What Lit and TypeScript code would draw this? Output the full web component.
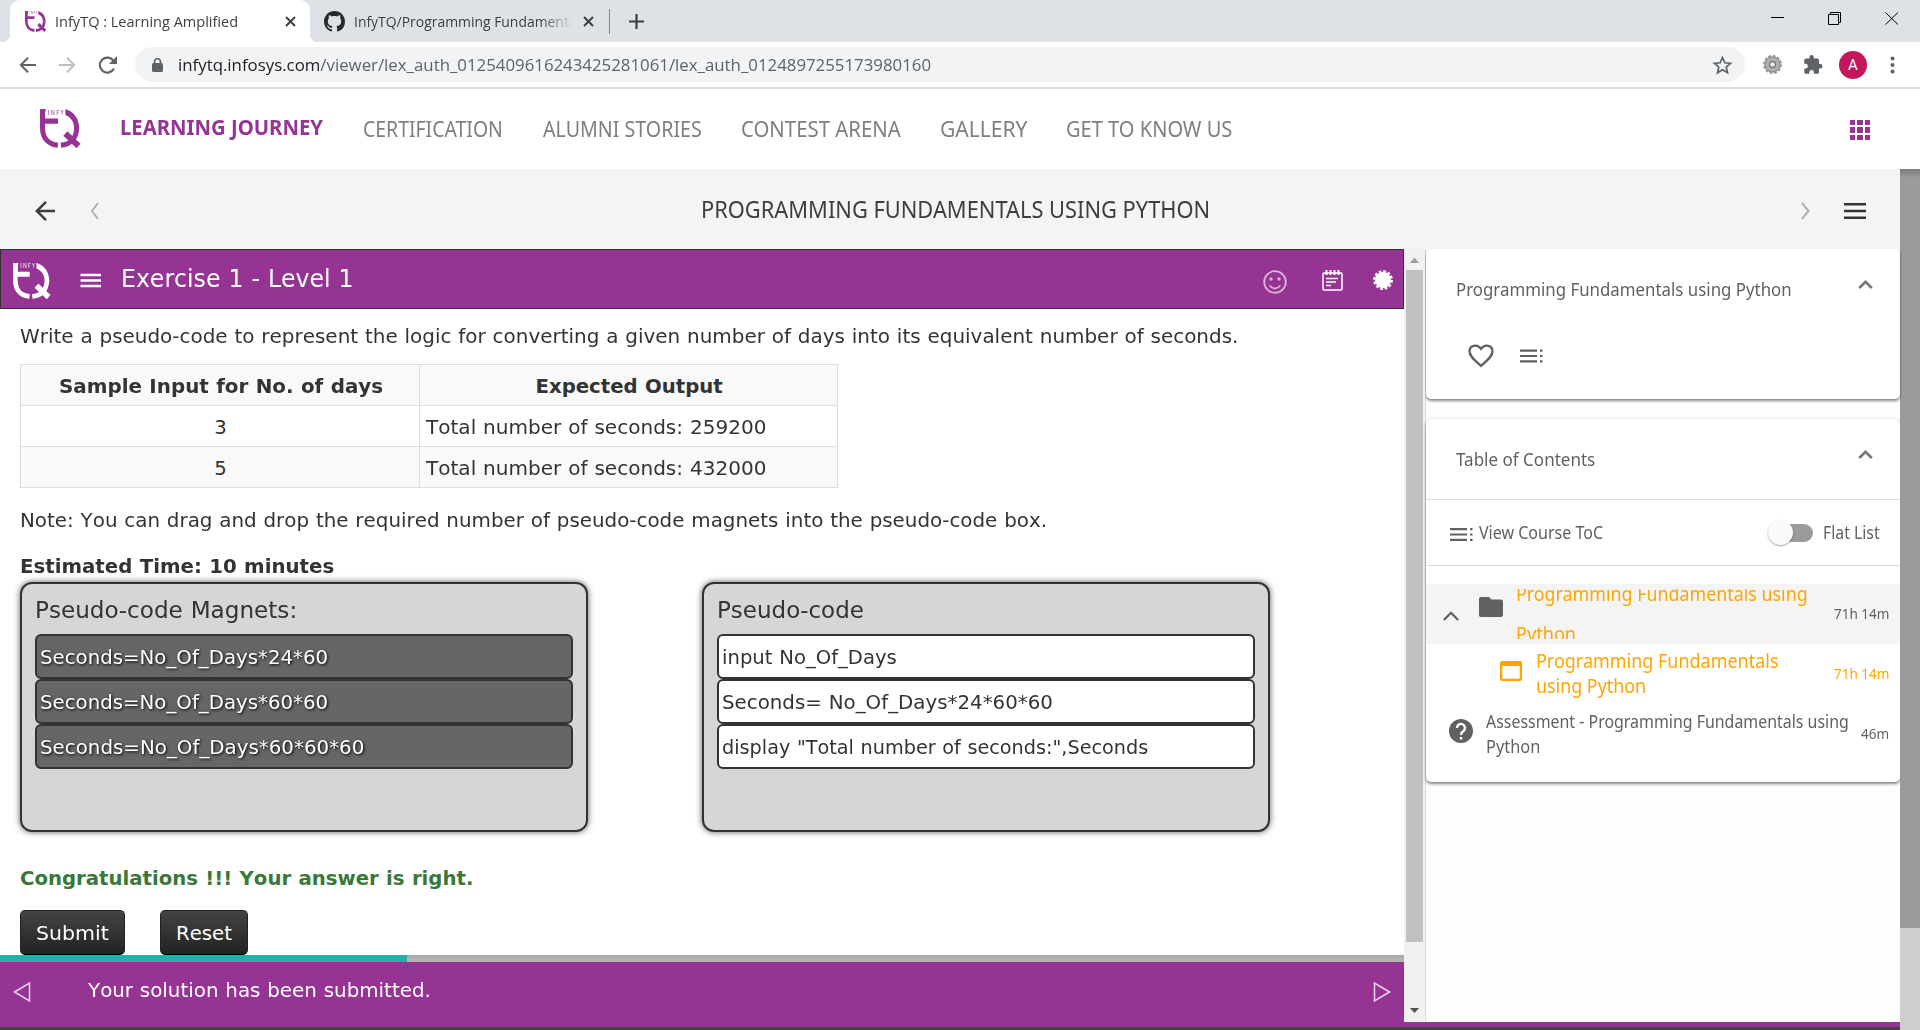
import { LitElement, html, css, svg } from "lit";
import { customElement, property, query } from "lit/decorators.js";

/** A single line of text, condensed or expanded to a given width. */
@customElement("fit-text")
class FitText extends LitElement {
  @property({ type: Number }) w = 100;
  @query(".line") line!: HTMLElement;
  static styles = css`
    :host { display: block; flex: none; white-space: nowrap; }
    .line { display: inline-block; transform-origin: 0 50%; vertical-align: top; }
  `;
  updated() {
    this.style.width = `${this.w}px`;
    this.line.style.transform = `scaleX(${this.w / this.line.offsetWidth})`;
  }
  render() {
    return html`<span class="line"><slot></slot></span>`;
  }
}

/** The InfyTQ mark, drawn in the current colour. */
@customElement("tq-logo")
class TqLogo extends LitElement {
  static styles = css`
    :host { display: block; flex: none; }
    svg { display: block; width: 100%; height: 100%; overflow: visible; }
    .s { fill: none; stroke: currentColor; stroke-width: 5.2; }
    .q { stroke-width: 6; }
    .n { font: 600 7.6px "Open Sans", sans-serif; fill: currentColor; opacity: .85; }
  `;
  render() {
    return html`<svg viewBox="0 0 41 39" preserveAspectRatio="none">
      <path class="s" d="M2.600 0V19C2.600 29.500 9 35.500 18.400 36.200M2.600 12.200H18.500" />
      <path fill="currentColor" d="M0 0H6L5 4V9H0Z" />
      <path class="s" d="M37.600 19C37.300 29.500 31 35.500 21.400 36.200" />
      <path fill="currentColor" d="M26 0C35 2.500 40.200 10 40.200 19.500H35C35 13 32 8.500 26 6Z" />
      <path class="s q" d="M26 24.500L39.500 37" />
      <text class="n" transform="translate(8 5.900) scale(.72 1)" textLength="22.500">INFY</text>
    </svg>`;
  }
}

const icon = (w: number, h: number, body: unknown, cls = "") =>
  html`<svg class="ic ${cls}" width=${w} height=${h} viewBox="0 0 ${w} ${h}">${body}</svg>`;

const closeX = svg`<path d="M1 1L10 10M10 1L1 10" stroke="#3c4043" stroke-width="2"/>`;
const chevUp = svg`<path d="M1.200 8L7.500 1.800L13.800 8" fill="none" stroke="#757575" stroke-width="2.600"/>`;
const tocLines = svg`<path d="M0 1.200H17M0 6.500H17M0 11.800H17M20 1.200H22.500M20 6.500H22.500M20 11.800H22.500" stroke="#616161" stroke-width="2.200"/>`;

const NAV: [string, number, number][] = [
  ["CERTIFICATION", 140, 40],
  ["ALUMNI STORIES", 159, 40],
  ["CONTEST ARENA", 160, 39],
  ["GALLERY", 87, 39],
  ["GET TO KNOW US", 166, 39],
];
const MAGNETS: [string, number][] = [
  ["Seconds=No_Of_Days*24*60", 288],
  ["Seconds=No_Of_Days*60*60", 288],
  ["Seconds=No_Of_Days*60*60*60", 324],
];
const CODE: [string, number][] = [
  ["input No_Of_Days", 175],
  ["Seconds= No_Of_Days*24*60*60", 331],
  ['display "Total number of seconds:",Seconds', 426],
];

@customElement("app-root")
class AppRoot extends LitElement {
  static styles = css`
    :host { display: block; width: 1920px; height: 1030px; overflow: hidden; background: #fff; font-family: "Noto Sans", sans-serif; line-height: 30px; color: #333; }
    * { box-sizing: border-box; }
    .ic { display: block; flex: none; overflow: visible; }

    .strip { height: 42px; background: #dee1e6; display: flex; font-family: "Open Sans", sans-serif; font-size: 15px; line-height: 22px; color: #3c4043; }
    .tab { position: relative; margin-left: 10px; width: 300px; background: #fff; border-radius: 10px 10px 0 0; padding: 0 15px; display: flex; align-items: center; }
    .tab::before, .tab::after { content: ""; position: absolute; bottom: 0; width: 8px; height: 8px; }
    .tab::before { left: -8px; background: radial-gradient(circle at 0 0, transparent 8px, #fff 8.5px); }
    .tab::after { right: -8px; background: radial-gradient(circle at 100% 0, transparent 8px, #fff 8.5px); }
    .fav { width: 21px; height: 21px; color: #963494; margin-right: 9px; }
    .tab fit-text, .clip { padding-bottom: 1px; }
    .tab .ic { margin-left: 47px; }
    .tab2 { display: flex; align-items: center; padding-left: 14px; width: 299px; }
    .clip { width: 219px; overflow: hidden; margin: 0 10px 0 9px; -webkit-mask-image: linear-gradient(90deg, #000 85%, transparent); mask-image: linear-gradient(90deg, #000 85%, transparent); }
    .bar { width: 1px; height: 25px; background: #80868b; align-self: center; }
    .plus { align-self: center; margin-left: 19px; }
    .win { margin-left: auto; display: flex; align-items: flex-start; gap: 43px; padding: 12px 21px 0 0; }

    .tools { height: 45px; display: flex; align-items: center; padding-left: 19px; }
    .omni { margin-left: 18px; width: 1610px; height: 35px; border-radius: 18px; background: #f1f3f4; display: flex; align-items: center; padding: 0 13px 0 17px; }
    .url { margin-left: 15px; font: 17px/30px "Open Sans", sans-serif; color: #5f6368; }
    .url b { font-weight: 400; color: #202124; }
    .star { margin-left: auto; }
    .ava { width: 28px; height: 28px; border-radius: 50%; background: #c2185b; color: #fff; font: 15px/28px Roboto, sans-serif; text-align: center; margin: 0 24px 0 17px; }
    .rule { height: 2px; background: #dadae2; }

    .nav { height: 80px; display: flex; align-items: flex-start; padding-left: 40px; font-size: 21.5px; color: #7f7f7f; }
    .nav .mark { width: 40px; height: 39px; margin-top: 20px; color: #963494; }
    .nav .on { margin: 22px 0 0 40px; font-size: 22px; font-weight: 700; color: #963494; }
    .nav .item { margin-top: 25px; }
    .g40 { margin-left: 40px; } .g39 { margin-left: 39px; }
    .apps { margin: 31px 50px 0 auto; }

    .main { display: flex; height: 861px; }
    .page { width: 1900px; }
    .vbar { width: 20px; background: #cecece; }
    .vthumb { height: 759px; background: linear-gradient(#7c7c7c, #9b9b9b 9px); }
    .head { height: 80px; background: #f4f4f4; display: flex; align-items: center; padding: 4px 34px 0 35px; color: #3e3e3e; font-size: 23.3px; }
    .title { margin: -4px auto 0 602px; }
    .body { display: flex; height: 773px; }
    .left { width: 1404px; height: 778px; font-family: "DejaVu Sans", sans-serif; font-size: 19.7px; font-kerning: none; word-spacing: .5px; }
    .ex { height: 60px; border: 1px solid #333; background: #963494; color: #fff; display: flex; align-items: flex-start; padding: 13px 10px 0 12px; }
    .ex .mark { width: 37px; height: 36px; }
    .ex .name { font-size: 24px; margin: 1px 0 0 20px; }
    .ex .tools2 { margin-left: auto; display: flex; }
    .q { padding: 13px 0 0 20px; height: 646px; }
    .tbl { display: grid; grid-template-columns: 399px 418px; grid-auto-rows: 41px; width: 819px; margin-top: 12px; border: solid #ddd; border-width: 1px 0 0 1px; }
    .c { border: solid #ddd; border-width: 0 1px 1px 0; padding: 7px 0 0 6px; display: flex; }
    .c.m { justify-content: center; padding-left: 1px; }
    .c.z { background: #f9f9f9; }
    .b { font-weight: 700; }
    .note { margin-top: 18px; } .est { margin: 16px 0 0; }
    .boxes { display: flex; gap: 114px; }
    .box { width: 568px; height: 250px; border: 2px solid #333; border-radius: 12px; background: #d6d6d6; box-shadow: 0 0 6px rgba(0,0,0,.65); padding: 11px 13px 0; }
    .bt { font-size: 23.3px; margin: 0 0 9px 0; }
    .mg { height: 45px; border: 2px solid #333; border-radius: 6px; padding: 6.5px 0 0 3px; background: #666; color: #fff; font-size: 19.3px; text-shadow: 1px 1px 3px #000; }
    .mg.w { background: #fff; color: #333; text-shadow: none; }
    .ok { margin-top: 32px; color: #3a783a; font-weight: 700; }
    .btns { display: flex; gap: 35px; margin-top: 16px; color: #fff; }
    .btn { height: 45px; border-radius: 5px; border: 1px solid #222; border-bottom-color: #000; background: linear-gradient(#444, #222); padding: 8px 15px 0; }
    .prog { height: 7px; background: linear-gradient(#a5a5a5, #b5b5b5 60%); }
    .done { width: 407px; height: 7px; background: #20b2aa; }
    .foot { height: 65px; background: #963494; color: #fff; display: flex; align-items: flex-start; padding: 13px 13px 0; }
    .foot .ic { margin-top: 7px; }
    .foot .msg { margin: 1px auto 0 57px; }
    .sb { width: 22px; background: #f1f1f1; border-right: 1px solid #ddd; display: flex; flex-direction: column; align-items: center; padding: 7px 1px 0 0; }
    .th { width: 17px; height: 672px; margin: 6px 0 66px; background: #c1c1c1; }
    .side { width: 474px; background: #fdfdfd; color: #616161; font-size: 18px; }
    .card { background: #fff; border-radius: 5px; box-shadow: 0 2px 3px rgba(0,0,0,.45), 0 0 3px rgba(0,0,0,.12); }
    .c1 { height: 150px; clip-path: inset(0 -2px -6px -1px); }
    .c2 { height: 363px; margin-top: 20px; }
    .ct { height: 80px; display: flex; padding: 25px 27px 0 30px; justify-content: space-between; }
    .ct .ic { margin-top: 6px; }
    .acts { display: flex; gap: 26px; padding: 15px 0 0 42px; }
    .line { height: 1px; background: #ddd; }
    .view { height: 65px; display: flex; align-items: center; padding: 1px 20px 0 24px; font-size: 17.2px; }
    .view .v { margin: 0 0 0 6px; }
    .sw { position: relative; margin: 0 10px 0 auto; width: 35px; height: 18px; border-radius: 9px; background: #9b9b9b; }
    .knob { position: absolute; left: -10px; top: -4px; width: 25px; height: 25px; border-radius: 50%; background: #fafafa; box-shadow: 0 1px 2px rgba(0,0,0,.35); }
    .r1 { margin-top: 18px; height: 60px; background: #f4f4f4; display: flex; padding-left: 17px; }
    .r1 .cv { margin: 27px 20px 0 0; } .r1 .fo { margin: 13px 13px 0 0; }
    .two { margin-top: 5px; height: 50px; overflow: hidden; color: #ffa500; font-size: 19px; line-height: 39px; }
    .up { margin-top: -14px; }
    .two fit-text + fit-text { padding-top: 1px; }
    .tm { margin: 14px 11px 0 auto; font-size: 14.5px; }
    .or { color: #ffa500; }
    .r2 { height: 65px; display: flex; padding-left: 74px; font-size: 19px; line-height: 25px; }
    .r2 .wi { margin: 17px 14px 0 0; } .r2 .tx { padding-top: 5px; } .r2 .tm { margin-top: 17px; }
    .r3 { display: flex; padding-left: 23px; font-size: 17.3px; line-height: 25px; }
    .r3 .qm { margin: 10px 13px 0 0; } .r3 .tm { margin-top: 12px; }
    .base { height: 5px; background: #963494; margin-left: 1404px; }
    .edge { height: 3px; background: #434343; }
  `;

  render() {
    return html`
      <div class="strip">
        <div class="tab">
          <tq-logo class="fav"></tq-logo>
          <fit-text w="183">InfyTQ : Learning Amplified</fit-text>
          ${icon(11, 11, closeX)}
        </div>
        <div class="tab2">
          ${icon(21, 21, svg`<path transform="scale(1.3125)" fill="#24292e" fill-rule="evenodd" d="M8 0C3.58 0 0 3.58 0 8c0 3.540 2.290 6.530 5.470 7.590.4.070.55-.17.55-.38 0-.19-.01-.82-.01-1.490-2.010.37-2.530-.49-2.690-.94-.09-.23-.48-.94-.82-1.130-.28-.15-.68-.52-.01-.53.63-.01 1.080.58 1.230.82.72 1.210 1.870.87 2.330.66.07-.52.28-.87.51-1.070-1.780-.2-3.640-.89-3.640-3.950 0-.87.31-1.590.82-2.150-.08-.2-.36-1.020.08-2.120 0 0 .67-.21 2.200.82.64-.18 1.320-.27 2-.27s1.360.09 2 .27c1.530-1.040 2.200-.82 2.200-.82.44 1.100.16 1.920.08 2.120.51.56.82 1.270.82 2.150 0 3.070-1.870 3.750-3.650 3.950.29.25.54.73.54 1.480 0 1.070-.01 1.930-.01 2.200 0 .21.15.46.55.38A8.010 8.010 0 0 0 16 8c0-4.420-3.580-8-8-8z"/>`)}
          <div class="clip"><fit-text w="233">InfyTQ/Programming Fundamentals</fit-text></div>
          ${icon(11, 11, closeX)}
        </div>
        <div class="bar"></div>
        ${icon(15, 15, svg`<path d="M7.500 0V15M0 7.500H15" stroke="#3c4043" stroke-width="2.200"/>`, "plus")}
        <div class="win">
          ${icon(14, 14, svg`<path d="M0 5.500H13" stroke="#000"/>`)}
          ${icon(14, 14, svg`<path d="M.5 2.500H10.500V12.500H.5ZM2.500 2.500V.5H12.500V10.500H10.500" fill="none" stroke="#000"/>`)}
          ${icon(14, 14, svg`<path d="M.5 .5L13 12.500M13 .5L.5 12.500" stroke="#000"/>`)}
        </div>
      </div>
      <div class="tools">
        ${icon(17, 16, svg`<path d="M17 8H2M9 .8L1.800 8L9 15.200" fill="none" stroke="#5f6368" stroke-width="2"/>`)}
        ${icon(40, 16, svg`<path d="M23 8H38M31 .8L38.200 8L31 15.200" fill="none" stroke="#bdbfc1" stroke-width="2"/>`)}
        ${icon(41, 18, svg`<path d="M38 12.500A7.500 7.500 0 1 1 37.500 4.800" fill="none" stroke="#5f6368" stroke-width="2.200"/><path d="M41 0V8H33Z" fill="#5f6368"/>`)}
        <div class="omni">
          ${icon(11, 14, svg`<rect y="5" width="11" height="9" rx="1.500" fill="#5f6368"/><path d="M2.500 6V3.800A3 3 0 0 1 8.500 3.800V6" fill="none" stroke="#5f6368" stroke-width="1.600"/>`)}
          <fit-text class="url" w="753"><b>infytq.infosys.com</b>/viewer/lex_auth_0125409616243425281061/lex_auth_0124897255173980160</fit-text>
          ${icon(19, 18, svg`<path d="M9.500 1.500L11.800 6.800L17.500 7.300L13.200 11L14.500 16.700L9.500 13.700L4.500 16.700L5.800 11L1.500 7.300L7.200 6.800Z" fill="none" stroke="#5f6368" stroke-width="1.700"/>`, "star")}
        </div>
        ${icon(37, 20, svg`<circle cx="27.500" cy="9.500" r="8.300" fill="none" stroke="#888" stroke-width="2.200" stroke-dasharray="2.600 1.750"/><circle cx="27.500" cy="9.500" r="5.600" fill="none" stroke="#b0b0b0" stroke-width="5.500"/><circle cx="27.500" cy="9.500" r="7.300" fill="none" stroke="#8a8a8a" stroke-width="1"/><circle cx="27.500" cy="9.500" r="3" fill="#eee" stroke="#777" stroke-width="1.300"/>`)}
        ${icon(40, 18, svg`<path transform="translate(20.500 -2) scale(.87 .9)" fill="#5f6368" d="M20.500 11H19V7c0-1.100-.9-2-2-2h-4V3.500a2.500 2.500 0 0 0-5 0V5H4c-1.100 0-2 .9-2 2v3.800h1.500a2.700 2.700 0 0 1 0 5.400H2V20c0 1.100.9 2 2 2h3.800v-1.500a2.700 2.700 0 0 1 5.400 0V22H17c1.100 0 2-.9 2-2v-4h1.500a2.500 2.500 0 0 0 0-5z"/>`)}
        <div class="ava">A</div>
        ${icon(4, 18, svg`<circle cx="1.500" cy="2.500" r="2" fill="#5f6368"/><circle cx="1.500" cy="9" r="2" fill="#5f6368"/><circle cx="1.500" cy="15.500" r="2" fill="#5f6368"/>`)}
      </div>
      <div class="rule"></div>
      <div class="nav">
        <tq-logo class="mark"></tq-logo>
        <fit-text class="on" w="203">LEARNING JOURNEY</fit-text>
        <div></div>
        ${NAV.map(([t, w, g], i) => html`<fit-text class="item ${i ? `g${g}` : "g40"}" w=${w}>${t}</fit-text>`)}
        ${icon(20, 20, svg`<path fill="#963494" d="M0 0h5v5H0zM7 0h6v5H7zM15 0h5v5h-5zM0 7h5v6H0zM7 7h6v6H7zM15 7h5v6h-5zM0 15h5v5H0zM7 15h6v5H7zM15 15h5v5h-5z"/>`, "apps")}
      </div>
      <div class="main">
        <div class="page">
          <div class="head">
            ${icon(20, 20, svg`<path d="M20 10H2M11 .8L1.800 10L11 19.200" fill="none" stroke="#3e3e3e" stroke-width="2.500"/>`)}
            ${icon(44, 18, svg`<path d="M43 1L37 9L43 17" fill="none" stroke="#b0b0b0" stroke-width="2"/>`)}
            <fit-text class="title" w="509">PROGRAMMING FUNDAMENTALS USING PYTHON</fit-text>
            ${icon(43, 18, svg`<path d="M1 1L7.500 9L1 17" fill="none" stroke="#b0b0b0" stroke-width="2"/>`)}
            ${icon(22, 16, svg`<path d="M0 1.300H22M0 8H22M0 14.700H22" stroke="#333" stroke-width="2.600"/>`)}
          </div>
          <div class="body">
            <div class="left">
              <div class="ex">
                <tq-logo class="mark"></tq-logo>
                ${icon(51, 26, svg`<path d="M30.500 12H51M30.500 17.500H51M30.500 23H51" stroke="#fff" stroke-width="2.600"/>`)}
                <fit-text class="name" w="233">Exercise 1 - Level 1</fit-text>
                <div class="tools2">
                  ${icon(24, 34, svg`<g fill="none" stroke="#d9b3d9" stroke-width="1.800"><circle cx="12" cy="19" r="10.800"/><path d="M6.500 22.500Q12 28.500 17.500 22.500"/></g><circle cx="8" cy="16" r="1.700" fill="#d9b3d9"/><circle cx="16" cy="16" r="1.700" fill="#d9b3d9"/>`)}
                  ${icon(56, 34, svg`<g transform="translate(35 7)" fill="none" stroke="#fff" stroke-width="1.500"><rect x="1" y="3" width="19" height="17" rx="1"/><path d="M4.500 0V5M8.500 0V5M12.500 0V5M16.500 0V5" stroke-width="2"/><path d="M4 8.500H16M4 12H14M4 15.500H9"/></g>`)}
                  ${icon(50, 34, svg`<circle cx="40" cy="17" r="8" fill="#fff"/><circle cx="40" cy="17" r="8.600" fill="none" stroke="#fff" stroke-width="2.600" stroke-dasharray="2.700 1.800"/>`)}
                </div>
              </div>
              <div class="q">
                <fit-text w="1218">Write a pseudo-code to represent the logic for converting a given number of days into its equivalent number of seconds.</fit-text>
                <div class="tbl">
                  <div class="c m z b"><fit-text w="324">Sample Input for No. of days</fit-text></div>
                  <div class="c m z b"><fit-text w="187">Expected Output</fit-text></div>
                  <div class="c m">3</div>
                  <div class="c"><fit-text w="340">Total number of seconds: 259200</fit-text></div>
                  <div class="c m z">5</div>
                  <div class="c z"><fit-text w="340">Total number of seconds: 432000</fit-text></div>
                </div>
                <fit-text class="note" w="1027">Note: You can drag and drop the required number of pseudo-code magnets into the pseudo-code box.</fit-text>
                <fit-text class="est b" w="314">Estimated Time: 10 minutes</fit-text>
                <div class="boxes">
                  <div class="box">
                    <fit-text class="bt" w="262">Pseudo-code Magnets:</fit-text>
                    ${MAGNETS.map(([t, w]) => html`<div class="mg"><fit-text w=${w}>${t}</fit-text></div>`)}
                  </div>
                  <div class="box">
                    <fit-text class="bt" w="147">Pseudo-code</fit-text>
                    ${CODE.map(([t, w]) => html`<div class="mg w"><fit-text w=${w}>${t}</fit-text></div>`)}
                  </div>
                </div>
                <fit-text class="ok" w="453">Congratulations !!! Your answer is right.</fit-text>
                <div class="btns">
                  <div class="btn"><fit-text w="73">Submit</fit-text></div>
                  <div class="btn"><fit-text w="56">Reset</fit-text></div>
                </div>
              </div>
              <div class="prog"><div class="done"></div></div>
              <div class="foot">
                ${icon(18, 20, svg`<path d="M1.500 10L16.500 1V19Z" fill="none" stroke="#ecd3ec" stroke-width="1.500"/>`)}
                <fit-text class="msg" w="343">Your solution has been submitted.</fit-text>
                ${icon(18, 20, svg`<path d="M16.500 10L1.500 1V19Z" fill="none" stroke="#ecd3ec" stroke-width="1.500"/>`)}
              </div>
            </div>
            <div class="sb">
              ${icon(9, 8, svg`<path d="M0 7H9L4.500 1.500Z" fill="#a0a0a0"/>`)}
              <div class="th"></div>
              ${icon(9, 6, svg`<path d="M0 0H9L4.500 5Z" fill="#505050"/>`)}
            </div>
            <div class="side">
              <div class="card c1">
                <div class="ct">
                  <fit-text w="336">Programming Fundamentals using Python</fit-text>
                  ${icon(15, 9, chevUp)}
                </div>
                <div class="acts">
                  ${icon(26, 24, svg`<path d="M13 22C7 16.500 1.500 12.500 1.500 7.300C1.500 1.500 9 -.5 13 4.800C17 -.5 24.500 1.500 24.500 7.300C24.500 12.500 19 16.500 13 22Z" fill="none" stroke="#616161" stroke-width="2.300"/>`)}
                  ${icon(23, 24, svg`<g transform="translate(0 5.500)">${tocLines}</g>`)}
                </div>
              </div>
              <div class="card c2">
                <div class="ct">
                  <fit-text w="139">Table of Contents</fit-text>
                  ${icon(15, 9, chevUp)}
                </div>
                <div class="line"></div>
                <div class="view">
                  ${icon(23, 10, tocLines)}
                  <fit-text class="v" w="124">View Course ToC</fit-text>
                  <div class="sw"><div class="knob"></div></div>
                  <fit-text w="57">Flat List</fit-text>
                </div>
                <div class="line"></div>
                <div class="r1">
                  ${icon(16, 10, svg`<path d="M.8 9L8 1.800L15.200 9" fill="none" stroke="#616161" stroke-width="2.300"/>`, "cv")}
                  ${icon(24, 20, svg`<path d="M2 0H10L12.500 2.500H22A2 2 0 0 1 24 4.500V18A2 2 0 0 1 22 20H2A2 2 0 0 1 0 18V2A2 2 0 0 1 2 0Z" fill="#616161"/>`, "fo")}
                  <div class="two">
                    <fit-text class="up" w="292">Programming Fundamentals using</fit-text>
                    <fit-text w="60">Python</fit-text>
                  </div>
                  <fit-text class="tm" w="55">71h 14m</fit-text>
                </div>
                <div class="r2 or">
                  ${icon(22, 20, svg`<path d="M2 0H20A2 2 0 0 1 22 2V18A2 2 0 0 1 20 20H2A2 2 0 0 1 0 18V2A2 2 0 0 1 2 0ZM2.300 5V17.700H19.700V5Z" fill="#ffa500" fill-rule="evenodd"/>`, "wi")}
                  <div class="tx">
                    <fit-text w="243">Programming Fundamentals</fit-text>
                    <fit-text w="110">using Python</fit-text>
                  </div>
                  <fit-text class="tm" w="55">71h 14m</fit-text>
                </div>
                <div class="r3">
                  ${icon(24, 24, svg`<circle cx="12" cy="12" r="12" fill="#616161"/><path d="M8 9A4 4 0 1 1 14.500 12C13 13.200 12 13.500 12 16" fill="none" stroke="#fff" stroke-width="2.400"/><rect x="10.800" y="18" width="2.500" height="2.500" fill="#fff"/>`, "qm")}
                  <div class="tx">
                    <fit-text w="363">Assessment - Programming Fundamentals using</fit-text>
                    <fit-text w="54">Python</fit-text>
                  </div>
                  <fit-text class="tm" w="28">46m</fit-text>
                </div>
              </div>
            </div>
          </div>
          <div class="base"></div>
          <div class="edge"></div>
        </div>
        <div class="vbar"><div class="vthumb"></div></div>
      </div>
    `;
  }
}
